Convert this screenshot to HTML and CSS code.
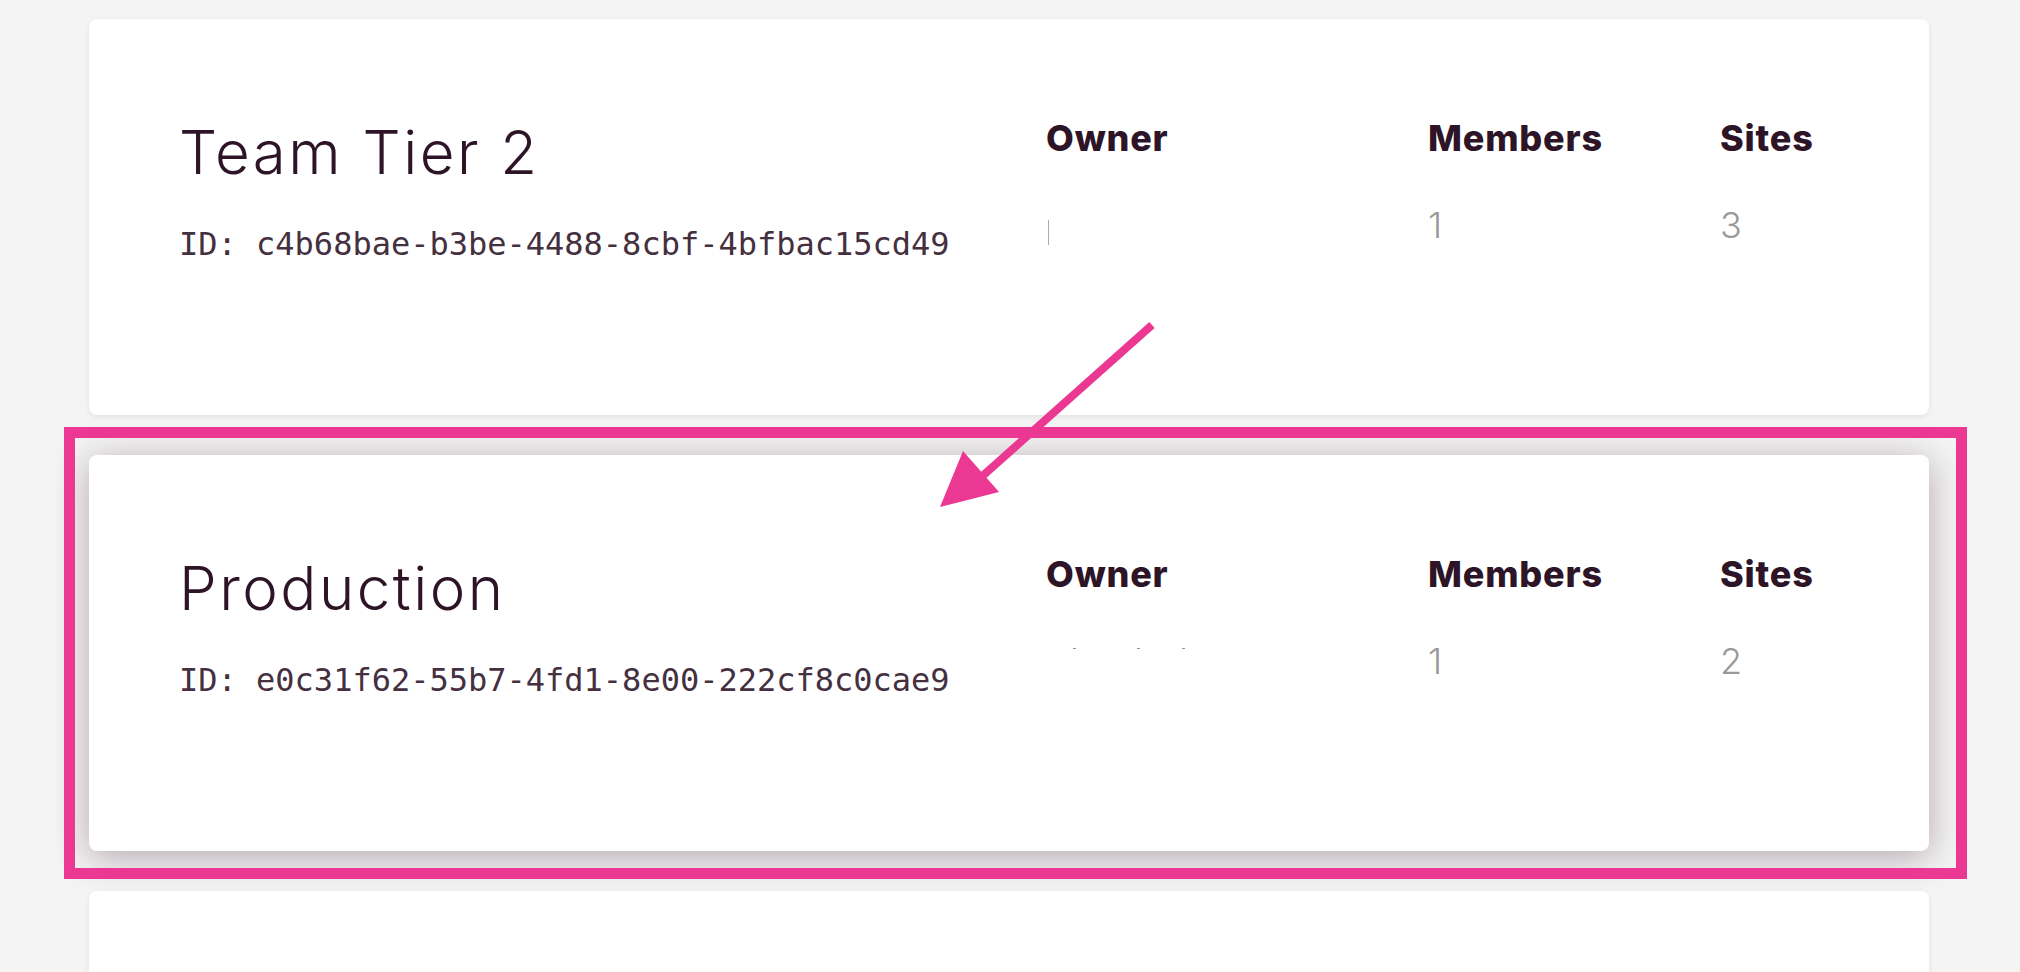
FILE: index.html
```html
<!DOCTYPE html>
<html lang="en">
<head>
  <meta charset="UTF-8">
  <title>Teams</title>
  <link rel="stylesheet" href="styles.css">
</head>
<body>
  <div class="teams">
    <div class="team-card">
      <div class="team-info">
        <h2 class="team-name">Team Tier 2</h2>
        <div class="team-id">ID: c4b68bae-b3be-4488-8cbf-4bfbac15cd49</div>
      </div>
      <div class="stat">
        <div class="stat-label">Owner</div>
        <div class="stat-value"><span class="owner-line"></span></div>
      </div>
      <div class="stat">
        <div class="stat-label">Members</div>
        <div class="stat-value">1</div>
      </div>
      <div class="stat">
        <div class="stat-label">Sites</div>
        <div class="stat-value">3</div>
      </div>
    </div>

    <div class="team-card active">
      <div class="team-info">
        <h2 class="team-name">Production</h2>
        <div class="team-id">ID: e0c31f62-55b7-4fd1-8e00-222cf8c0cae9</div>
      </div>
      <div class="stat">
        <div class="stat-label">Owner</div>
        <div class="stat-value">
          <span class="owner-dots"><i></i><i></i><i></i></span>
        </div>
      </div>
      <div class="stat">
        <div class="stat-label">Members</div>
        <div class="stat-value">1</div>
      </div>
      <div class="stat">
        <div class="stat-label">Sites</div>
        <div class="stat-value">2</div>
      </div>
    </div>

    <div class="team-card"></div>
  </div>

  <!-- highlight drawn on top of the list -->
  <svg class="annotation" width="2020" height="972" viewBox="0 0 2020 972">
    <rect x="69.5" y="432.5" width="1892" height="441" fill="none" stroke="#eb3893" stroke-width="11"/>
    <line x1="1152" y1="325" x2="978" y2="480" stroke="#eb3893" stroke-width="8"/>
    <polygon points="963,451 999,492 940,507" fill="#eb3893"/>
  </svg>
</body>
</html>
```

FILE: styles.css
```css
body {
  margin: 0;
  background: #f4f4f4;
  font-family: Inter, 'Noto Sans', sans-serif;
  color: #2d1427;
  position: relative;
  overflow: hidden;
  height: 972px;
}
.teams {
  width: 1840px;
  padding: 19px 0 0 89px;
}
.team-card {
  display: grid;
  grid-template-columns: 1fr 382px 292px 119px;
  align-items: start;
  height: 396px;
  box-sizing: border-box;
  padding: 97px 90px 0;
  margin-bottom: 40px;
  background: #fff;
  border-radius: 8px;
  box-shadow: 0 2px 6px rgba(0,0,0,0.07);
}
.team-card.active {
  box-shadow: 0 6px 36px rgba(70,40,60,0.38);
}
.team-name {
  margin: 0;
  font-size: 60px;
  font-weight: 300;
  line-height: 72px;
  letter-spacing: 2.5px;
}
.team-id {
  margin-top: 36px;
  font-family: 'DejaVu Sans Mono', 'Liberation Mono', monospace;
  font-size: 32px;
  line-height: 40px;
  color: #45303f;
}
.stat-label {
  font-size: 36px;
  font-weight: 800;
  line-height: 44px;
  letter-spacing: 0.8px;
}
.stat-value {
  margin-top: 43px;
  font-size: 36px;
  font-weight: 300;
  line-height: 44px;
  color: #999;
  height: 44px;
}
.owner-line {
  display: inline-block;
  vertical-align: top;
  width: 1px;
  height: 25px;
  margin: 17px 0 0 2px;
  background: #aaa;
}
.owner-dots {
  display: flex;
  padding-top: 9px;
}
.owner-dots i {
  width: 3px;
  height: 1px;
  background: #999;
}
.owner-dots i:nth-child(1) { margin-left: 27px; }
.owner-dots i:nth-child(2) { margin-left: 61px; }
.owner-dots i:nth-child(3) { margin-left: 42px; }
.annotation {
  position: absolute;
  top: 0;
  left: 0;
  pointer-events: none;
}
```
